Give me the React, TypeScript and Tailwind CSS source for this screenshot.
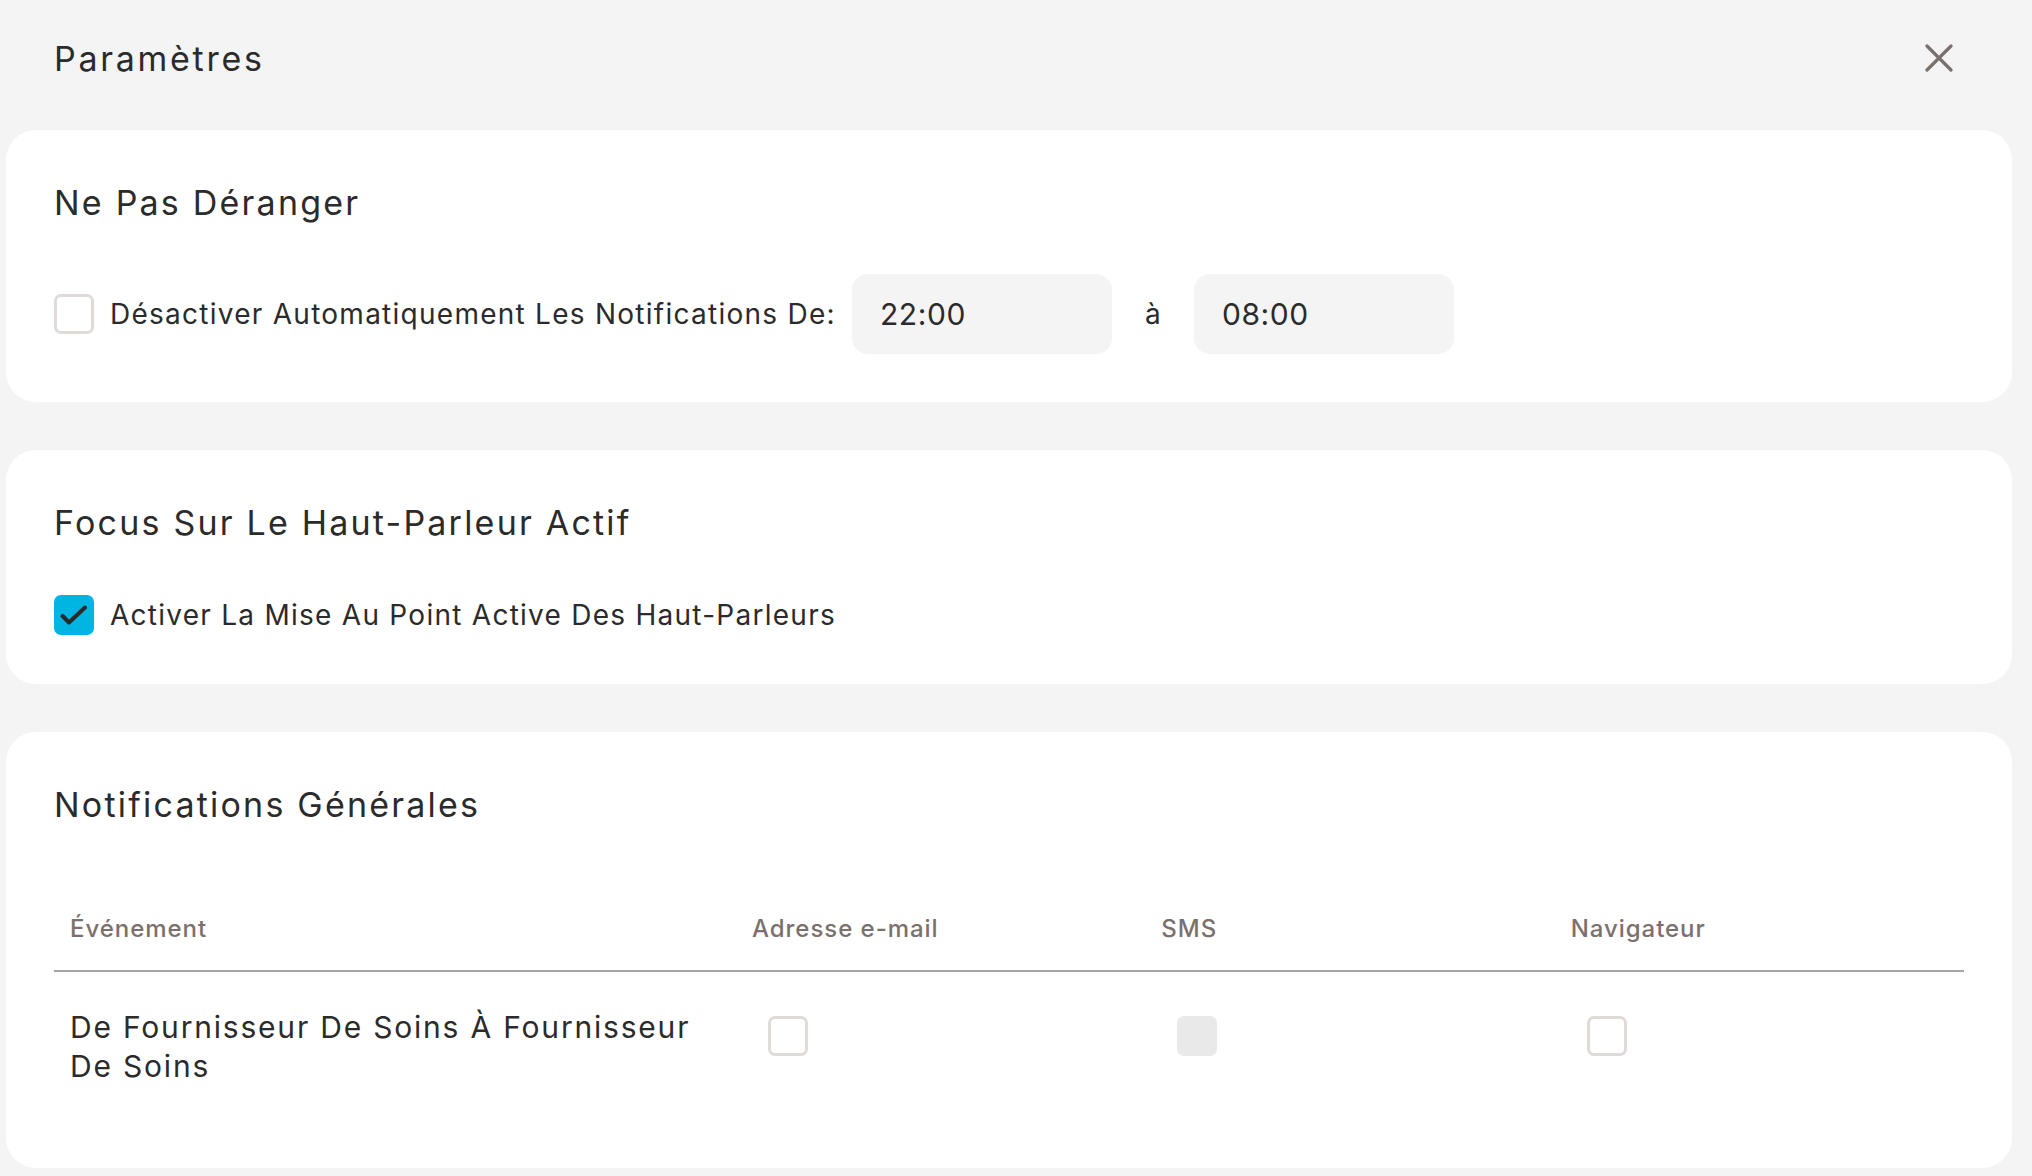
import React from "react";

const font = { fontFamily: "Inter, 'Noto Sans', sans-serif" };

function Checkbox({ checked, disabled }: { checked?: boolean; disabled?: boolean }) {
  if (checked) {
    return (
      <div className="flex h-10 w-10 shrink-0 items-center justify-center rounded-[7px] bg-[#00b5e2]">
        <svg width="40" height="40" viewBox="0 0 40 40" fill="none">
          <path d="M8.5 21L15 27.5L31 12.5" stroke="#2a2a2a" strokeWidth="4" strokeLinecap="round" strokeLinejoin="round" />
        </svg>
      </div>
    );
  }
  if (disabled) {
    return <div className="h-10 w-10 shrink-0 rounded-[7px] bg-[#e9e9e9]" />;
  }
  return <div className="h-10 w-10 shrink-0 rounded-[7px] border-[3px] border-[#dfdbd9] bg-white" />;
}

function Card({ title, children }: { title: string; children: React.ReactNode }) {
  return (
    <section className="rounded-[30px] bg-white p-12">
      <h2 className="pt-1 text-[34px] leading-[41px] tracking-[0.065em] text-[#2b2b2b]">{title}</h2>
      {children}
    </section>
  );
}

const columns = ["Événement", "Adresse e-mail", "SMS", "Navigateur"];

export default function App() {
  return (
    <div className="min-h-[1176px] bg-[#f4f4f4] pl-[6px] pr-[20px]" style={font}>
      <header className="flex h-[130px] items-center justify-between pb-[14px] pl-12 pr-[59px]">
        <h1 className="text-[34px] tracking-[0.08em] text-[#2b2b2b]">Paramètres</h1>
        <button className="text-[#7a716e]">
          <svg width="28" height="28" viewBox="0 0 28 28" fill="none">
            <path d="M2 2L26 26M26 2L2 26" stroke="currentColor" strokeWidth="3.2" strokeLinecap="round" />
          </svg>
        </button>
      </header>

      <div className="flex flex-col gap-12">
        <Card title="Ne Pas Déranger">
          <div className="mt-[51px] flex h-20 items-center text-[28px] text-[#2b2b2b]">
            <Checkbox />
            <span className="ml-4 tracking-[0.045em]">Désactiver Automatiquement Les Notifications De:</span>
            <div className="ml-4 flex h-20 w-[260px] items-center rounded-2xl bg-[#f4f4f4] px-7 text-[30px] tracking-[0.02em]">22:00</div>
            <span className="w-[82px] text-center">à</span>
            <div className="flex h-20 w-[260px] items-center rounded-2xl bg-[#f4f4f4] px-7 text-[30px] tracking-[0.02em]">08:00</div>
          </div>
        </Card>

        <Card title="Focus Sur Le Haut-Parleur Actif">
          <div className="mt-[51px] flex items-center text-[28px] text-[#2b2b2b]">
            <Checkbox checked />
            <span className="ml-4 tracking-[0.045em]">Activer La Mise Au Point Active Des Haut-Parleurs</span>
          </div>
        </Card>

        <Card title="Notifications Générales">
          <div className="mt-[62px]">
            <div className="grid grid-cols-[682px_1fr_1fr_1fr] border-b-2 border-[#aaa5a2]">
              {columns.map((c) => (
                <div key={c} className="px-4 pb-[23px] pt-6 text-[24px] font-medium leading-9 tracking-[0.04em] text-[#7a716e]">
                  {c}
                </div>
              ))}
            </div>
            <div className="grid grid-cols-[682px_1fr_1fr_1fr] pb-[34px] pt-9">
              <div className="px-4 text-[30px] leading-[39px] tracking-[0.06em] text-[#2b2b2b]">
                De Fournisseur De Soins À Fournisseur De Soins
              </div>
              <div className="pl-8 pt-2">
                <Checkbox />
              </div>
              <div className="pl-8 pt-2">
                <Checkbox disabled />
              </div>
              <div className="pl-8 pt-2">
                <Checkbox />
              </div>
            </div>
          </div>
        </Card>
      </div>
    </div>
  );
}
